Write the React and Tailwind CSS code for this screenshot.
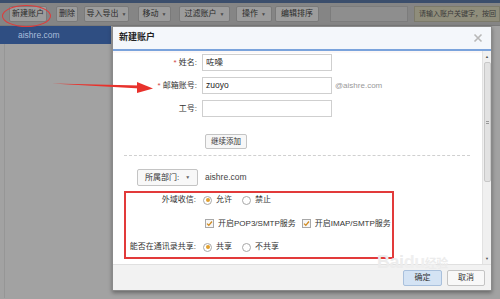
import React from "react";

function ToolBtn({ children, caret, w, ml }) {
  return (
    <div className={`h-[16px] ${w} ${ml} shrink-0 flex items-center justify-center gap-[3px] bg-[#9c9c9c] border border-[#7a7a7a] rounded-[2px] text-[8px] text-[#2a2a2a] leading-none whitespace-nowrap`}>
      <span>{children}</span>
      {caret && <span className="text-[5px] text-[#4a4a4a]">▼</span>}
    </div>
  );
}

function Radio({ checked, label }) {
  return (
    <div className="flex items-center gap-[4px]">
      <div className="w-[9px] h-[9px] rounded-full border border-[#a8a8a8] bg-white flex items-center justify-center">
        {checked && <div className="w-[4px] h-[4px] rounded-full bg-[#e0a030]" />}
      </div>
      <span>{label}</span>
    </div>
  );
}

function Check({ label }) {
  return (
    <div className="flex items-center gap-[4px]">
      <div className="w-[9px] h-[9px] border border-[#a8a8a8] bg-[#f6f6f6] flex items-center justify-center">
        <svg width="7" height="7" viewBox="0 0 7 7">
          <path d="M1 3.6 L2.8 5.3 L6 1.5" stroke="#d08a20" strokeWidth="1.3" fill="none" />
        </svg>
      </div>
      <span>{label}</span>
    </div>
  );
}

export default function App() {
  const font = "font-['Liberation_Sans','Noto_Sans_CJK_SC',sans-serif]";
  return (
    <div className={`relative w-[500px] h-[299px] overflow-hidden bg-[#a2a2a2] ${font}`}>
      {/* top strip */}
      <div className="h-[3px] bg-[#3b4e6c]" />
      {/* toolbar */}
      <div className="h-[23px] bg-[#858585] flex items-center border-b border-[#7a7a7a]">
        <ToolBtn w="w-[38px]" ml="ml-[9px]">新建账户</ToolBtn>
        <ToolBtn w="w-[22px]" ml="ml-[9px]">删除</ToolBtn>
        <ToolBtn w="w-[45px]" ml="ml-[6px]" caret>导入导出</ToolBtn>
        <ToolBtn w="w-[33px]" ml="ml-[9px]" caret>移动</ToolBtn>
        <ToolBtn w="w-[51px]" ml="ml-[8px]" caret>过滤账户</ToolBtn>
        <ToolBtn w="w-[36px]" ml="ml-[6px]" caret>操作</ToolBtn>
        <ToolBtn w="w-[44px]" ml="ml-[3px]">编辑排序</ToolBtn>
        <div className="ml-[11px] w-[78px] h-[16px] shrink-0 bg-[#8e8e8e] border border-[#7c7c7c]" />
        <div className="ml-[6px] flex-1 h-[16px] bg-[#8f8d7b] border border-[#7c7a6a] flex items-center pl-[4px] text-[7px] text-[#3a3a3a] whitespace-nowrap overflow-hidden">
          请输入账户关键字，按回
        </div>
      </div>
      {/* main area */}
      <div className="flex h-[272px]">
        <div className="w-[111px] flex flex-col">
          <div className="h-[18px] bg-[#2f4e82] flex items-center pl-[18px] text-[8.5px] text-[#a9bddb]">aishre.com</div>
          <div className="flex-1 flex">
            <div className="w-[4px]" />
            <div className="w-[1px] bg-[#969696]" />
          </div>
        </div>
        <div className="flex-1" />
      </div>

      {/* dialog */}
      <div className="absolute left-[112px] top-[26px] w-[380px] h-[265px] bg-white flex flex-col shadow-[0_2px_4px_rgba(0,0,0,0.35)] border border-[#8a8a8a]">
        <div className="h-[22px] bg-[#f4f7fb] flex items-center justify-between px-[6px] text-[9px] text-[#222] font-semibold">
          <span>新建账户</span>
          <svg width="10" height="10" viewBox="0 0 10 10" className="mr-[2px]">
            <path d="M1.5 1.5 L8.5 8.5 M8.5 1.5 L1.5 8.5" stroke="#b8b8b8" strokeWidth="1.6" />
          </svg>
        </div>
        <div className="h-[2px] bg-[#7aa3dc]" />
        <div className="flex-1 flex min-h-0">
          <div className="flex-1 flex flex-col text-[8px] text-[#333]">
            <div className="h-[2px] bg-[#fbf7f7]" />
            <div className="flex items-center mt-[1px] h-[17px]">
              <div className="w-[86px] text-right pr-[2px]"><span className="text-[#d04545]">* </span>姓名:</div>
              <div className="ml-[3px] w-[130px] h-[17px] border border-[#cfcfcf] flex items-center pl-[3px] text-[8.5px] text-[#222]">咗噪</div>
            </div>
            <div className="flex items-center mt-[6px] h-[17px]">
              <div className="w-[86px] text-right pr-[2px]"><span className="text-[#d04545]">* </span>邮箱账号:</div>
              <div className="ml-[3px] w-[130px] h-[17px] border border-[#cfcfcf] flex items-center pl-[3px] text-[8.5px] text-[#222]">zuoyo</div>
              <span className="ml-[3px] text-[8px] text-[#999]">@aishre.com</span>
            </div>
            <div className="flex items-center mt-[6px] h-[17px]">
              <div className="w-[86px] text-right pr-[2px]">工号:</div>
              <div className="ml-[3px] w-[130px] h-[17px] border border-[#cfcfcf]" />
            </div>
            <div className="flex mt-[17px] pl-[92px]">
              <div className="h-[15px] px-[5px] border border-[#c4c4c4] rounded-[2px] bg-[#f7f7f7] flex items-center text-[7.5px] text-[#333]">继续添加</div>
            </div>
            <div className="mt-[6px] ml-[11px] mr-[12px] border-t border-dashed border-[#d0d0d0]" />
            <div className="flex items-center mt-[13px]">
              <div className="ml-[24px] w-[61px] h-[17px] border border-[#c4c4c4] rounded-[2px] bg-[#f8f8f8] flex items-center justify-center gap-[6px] text-[8px]">
                <span>所属部门:</span>
                <span className="text-[5px] text-[#666]">▼</span>
              </div>
              <span className="ml-[7px] text-[8.5px] text-[#444]">aishre.com</span>
            </div>
            <div className="mt-[5px] ml-[11px] w-[270px] h-[68px] border-2 border-[#e23a3a] flex flex-col pt-[1px] gap-[11.5px]">
              <div className="flex items-center h-[12px]">
                <div className="w-[72px] text-right pr-[2px]">外域收信:</div>
                <div className="ml-[5px] flex gap-[10px]">
                  <Radio checked label="允许" />
                  <Radio label="禁止" />
                </div>
              </div>
              <div className="flex items-center h-[12px] pl-[79px] gap-[6px]">
                <Check label="开启POP3/SMTP服务" />
                <Check label="开启IMAP/SMTP服务" />
              </div>
              <div className="flex items-center h-[12px]">
                <div className="w-[72px] text-right pr-[2px] whitespace-nowrap">能否在通讯录共享:</div>
                <div className="ml-[5px] flex gap-[10px]">
                  <Radio checked label="共享" />
                  <Radio label="不共享" />
                </div>
              </div>
            </div>
          </div>
          <div className="w-[9px] bg-[#f0f0f0] border-l border-[#e2e2e2] flex flex-col items-center">
            <span className="text-[4px] text-[#555] mt-[3px]">▲</span>
            <div className="mt-[2px] w-[7px] h-[120px] bg-[#e2e2e2] border border-[#c8c8c8] rounded-[2px] flex items-center justify-center">
              <div className="w-[3px] h-[3px] border-y border-[#999]" />
            </div>
            <div className="flex-1" />
            <span className="text-[4px] text-[#555] mb-[2px]">▼</span>
          </div>
        </div>
        <div className="h-[26px] bg-[#f2f2f2] border-t border-[#e0e0e0] flex items-center justify-end gap-[5px] pr-[6px] relative">
          <div className="absolute left-[264px] top-[-16px] text-[18px] font-bold text-[#ececec] tracking-tight pointer-events-none whitespace-nowrap">Bai<span className="text-[#efefef]">du</span><span className="text-[12px]">经验</span></div>
          <div className="relative w-[39px] h-[16px] bg-[#d4e3f4] border border-[#a9c0dc] rounded-[2px] flex items-center justify-center text-[8px] text-[#333]">确定</div>
          <div className="relative w-[38px] h-[16px] bg-[#f8f8f8] border border-[#c4c4c4] rounded-[2px] flex items-center justify-center text-[8px] text-[#333]">取消</div>
        </div>
      </div>

      <div className="absolute left-[2px] top-[5px] w-[49px] h-[22px] rounded-[50%] border-[1.5px] border-[#e03a3a]" />
      <svg className="absolute left-0 top-0" width="500" height="299" viewBox="0 0 500 299">
        <path d="M52 83.5 L140 85.5 L140 88.4 Z" fill="#e8322c" />
        <path d="M137 82 L153 88.5 L137 93 Z" fill="#e8322c" />
      </svg>
    </div>
  );
}
